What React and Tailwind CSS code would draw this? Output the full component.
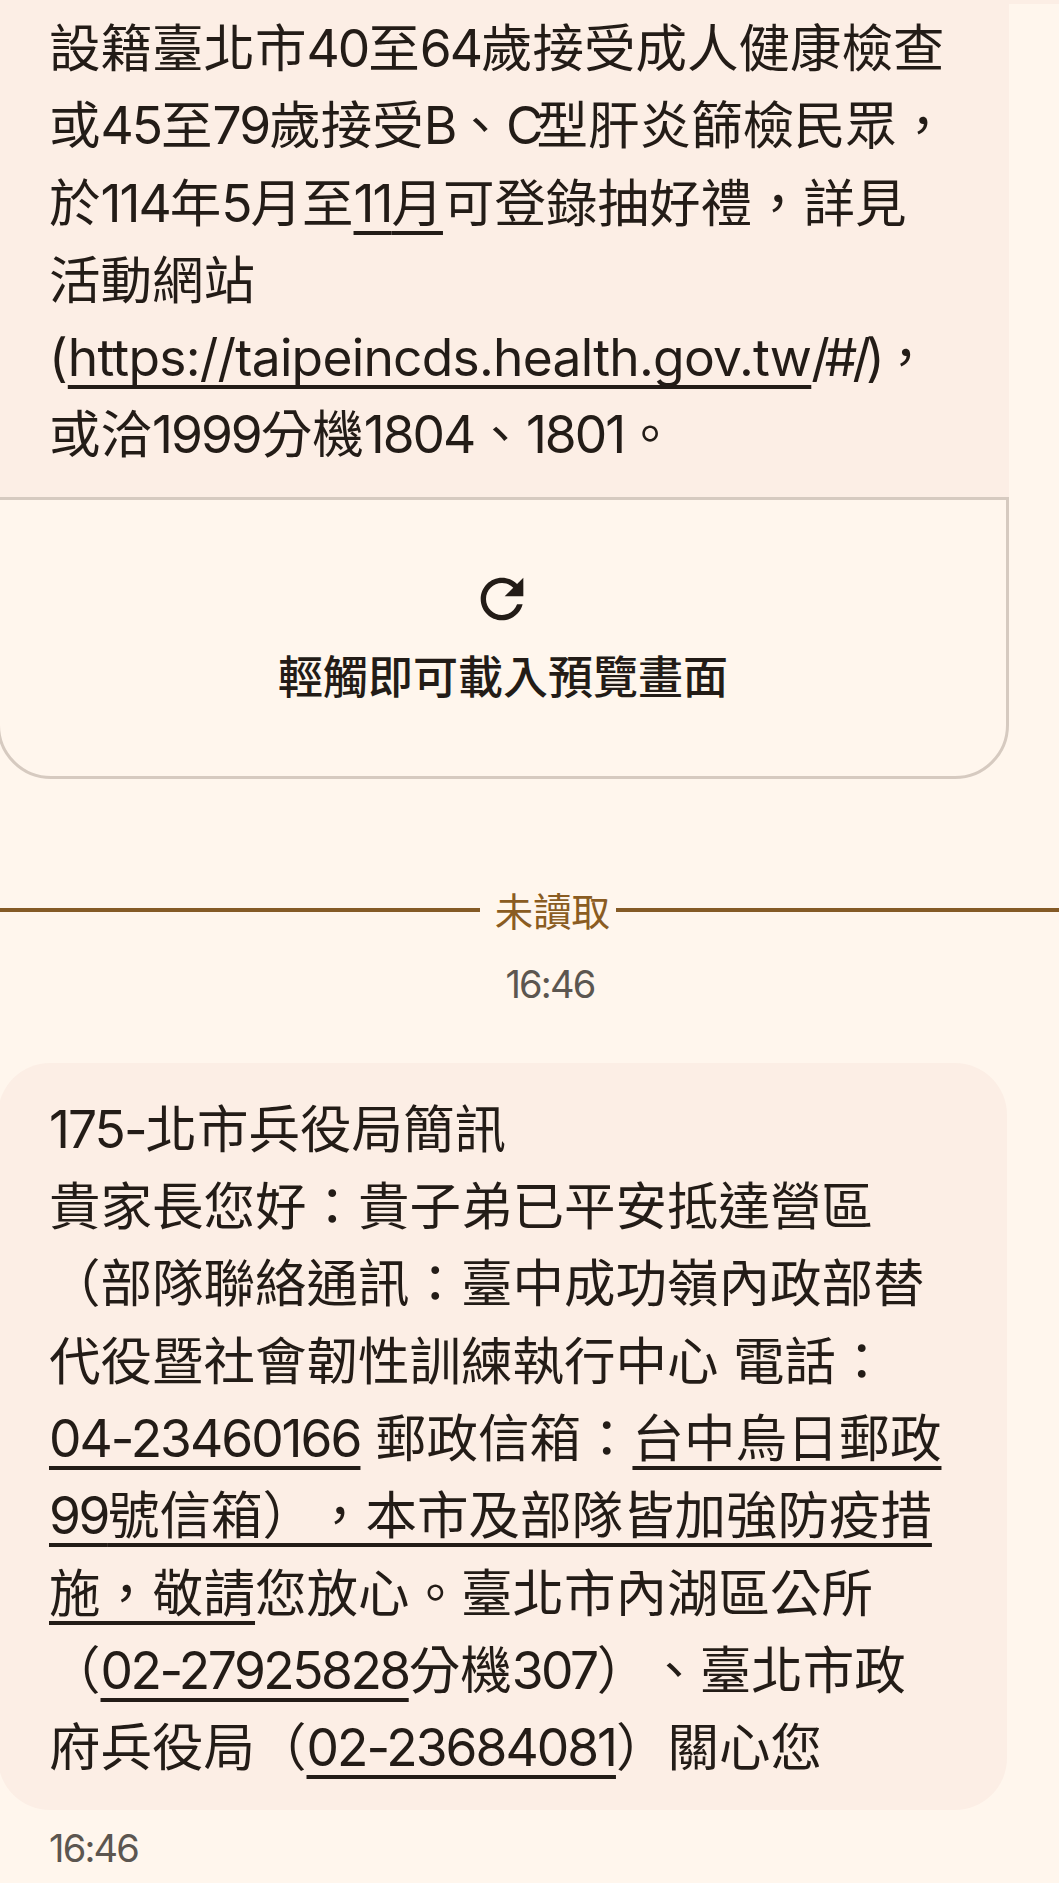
const Refresh = () => (
  <svg viewBox="0 0 24 24" className="w-[64px] h-[64px] fill-[#231c17]">
    <path d="M17.65 6.35C16.2 4.9 14.21 4 12 4c-4.42 0-7.99 3.58-7.99 8s3.57 8 7.99 8c3.73 0 6.84-2.55 7.73-6h-2.08c-.82 2.33-3.04 4-5.65 4-3.31 0-6-2.69-6-6s2.69-6 6-6c1.66 0 3.14.69 4.22 1.78L13 11h7V4l-2.35 2.35z" />
  </svg>
);

const Link = ({ children }) => (
  <span className="underline decoration-[4px] underline-offset-[9px] [text-decoration-skip-ink:none]">{children}</span>
);

// the digits in the reference run tighter than Inter
const Num = ({ children }) => <span className="tracking-[-2px]">{children}</span>;
const NumTight = ({ children }) => <span className="tracking-[-2.5px]">{children}</span>;

const fontStack = "font-['Inter','Noto_Sans_CJK_TC',sans-serif]";

export default function App() {
  return (
    <div className={`w-[1059px] h-[1883px] overflow-hidden bg-[#fff6ed] text-[#231c17] [text-spacing-trim:space-all] ${fontStack}`}>
      <div className="h-[4px] bg-[#fceee5]" />
      <div className="w-[1009px] bg-[#fceee5] pt-[6px] pb-[23px] pl-[49px] text-[51.5px] leading-[77.3px] whitespace-nowrap">
        <div>設籍臺北市<Num>40</Num>至<Num>64</Num>歲接受成人健康檢查</div>
        <div>或<Num>45</Num>至<Num>79</Num>歲接受<span className="tracking-[-3px]">B</span>、<span className="tracking-[-7px]">C</span>型肝炎篩檢民眾，</div>
        <div>於<Num>114</Num>年<Num>5</Num>月至<Link><Num>11</Num>月</Link>可登錄抽好禮，詳見</div>
        <div>活動網站</div>
        <div>(<Link><span className="tracking-[-0.75px]">https://taipeincds.health.gov.tw</span></Link><span className="tracking-[-5px]">/#/)</span>，</div>
        <div>或洽<Num>1999</Num>分機<Num>1804</Num>、<Num>1801</Num>。</div>
      </div>

      <div className="w-[1012px] h-[282px] -ml-[3px] border-[3px] border-[#d6cac0] rounded-b-[54px] flex flex-col items-center">
        <div className="mt-[67px] mr-[2px]"><Refresh /></div>
        <div className="mt-[19px] text-[45px] leading-[56px] font-medium">輕觸即可載入預覽畫面</div>
      </div>

      <div className="mt-[104px] flex items-center text-[#8a5c22]">
        <div className="flex-1 h-[4px] bg-[#845a26]" />
        <div className="mt-[4px] ml-[15px] mr-[6px] text-[38.4px] leading-[50px] whitespace-nowrap">未讀取</div>
        <div className="w-[443px] h-[4px] bg-[#845a26]" />
      </div>

      <div className="mt-[22px] pl-[41px] text-center text-[38px] leading-[50px] tracking-[-1.8px] text-[#5c5650]">16:46</div>

      <div className="mt-[54px] w-[1009px] -ml-[2px] bg-[#fceee5] rounded-[52px] pt-[28px] pb-[24px] pl-[51px] text-[51.5px] leading-[77.3px] whitespace-nowrap">
        <div><Num>175-</Num>北市兵役局簡訊</div>
        <div>貴家長您好：貴子弟已平安抵達營區</div>
        <div>（部隊聯絡通訊：臺中成功嶺內政部替</div>
        <div>代役暨社會韌性訓練執行中心 電話：</div>
        <div><Link><Num>04-23460166</Num></Link> 郵政信箱：<Link>台中烏日郵政</Link></div>
        <div><Link><NumTight>99</NumTight>號信箱），本市及部隊皆加強防疫措</Link></div>
        <div><Link>施，敬請</Link>您放心。臺北市內湖區公所</div>
        <div>（<Link><NumTight>02-27925828</NumTight></Link>分機<NumTight>307</NumTight>）、臺北市政</div>
        <div>府兵役局（<Link><Num>02-23684081</Num></Link>）關心您</div>
      </div>

      <div className="mt-[13px] pl-[49px] text-[38px] leading-[50px] tracking-[-1.8px] text-[#5c5650]">16:46</div>
    </div>
  );
}
